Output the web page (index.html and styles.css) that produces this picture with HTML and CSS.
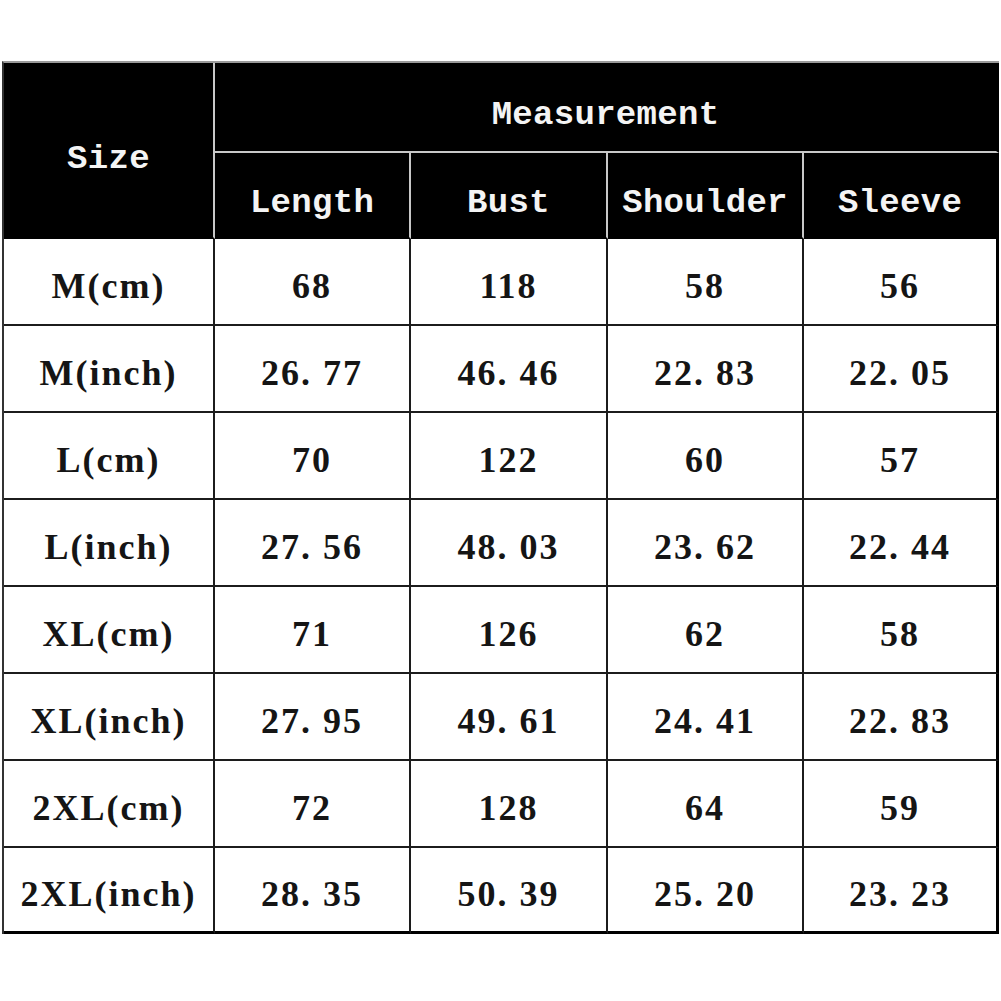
FILE: index.html
```html
<!DOCTYPE html>
<html>
<head>
<meta charset="utf-8">
<link rel="stylesheet" href="styles.css">
</head>
<body>
<div class="chart">
  <div class="cell head size">Size</div>
  <div class="cell head meas">Measurement</div>
  <div class="cell head sub">Length</div>
  <div class="cell head sub">Bust</div>
  <div class="cell head sub">Shoulder</div>
  <div class="cell head sub last">Sleeve</div>

  <div class="cell">M(cm)</div><div class="cell">68</div><div class="cell">118</div><div class="cell">58</div><div class="cell last">56</div>
  <div class="cell">M(inch)</div><div class="cell">26. 77</div><div class="cell">46. 46</div><div class="cell">22. 83</div><div class="cell last">22. 05</div>
  <div class="cell">L(cm)</div><div class="cell">70</div><div class="cell">122</div><div class="cell">60</div><div class="cell last">57</div>
  <div class="cell">L(inch)</div><div class="cell">27. 56</div><div class="cell">48. 03</div><div class="cell">23. 62</div><div class="cell last">22. 44</div>
  <div class="cell">XL(cm)</div><div class="cell">71</div><div class="cell">126</div><div class="cell">62</div><div class="cell last">58</div>
  <div class="cell">XL(inch)</div><div class="cell">27. 95</div><div class="cell">49. 61</div><div class="cell">24. 41</div><div class="cell last">22. 83</div>
  <div class="cell">2XL(cm)</div><div class="cell">72</div><div class="cell">128</div><div class="cell">64</div><div class="cell last">59</div>
  <div class="cell bottom">2XL(inch)</div><div class="cell bottom">28. 35</div><div class="cell bottom">50. 39</div><div class="cell bottom">25. 20</div><div class="cell bottom last">23. 23</div>
</div>
</body>
</html>
```

FILE: styles.css
```css
html, body {
  margin: 0;
  padding: 0;
  background: #ffffff;
}

body {
  padding: 61px 0 0 2px;
}

.chart {
  display: grid;
  width: 997px;
  box-sizing: border-box;
  grid-template-columns: 211px 196px 197px 196px 195px;
  grid-template-rows: 90px 86px repeat(7, 87px) 86px;
  border-left: 2px solid #333;
  border-top: 2px solid #9a9a9a;
}

.cell {
  box-sizing: border-box;
  display: flex;
  align-items: center;
  justify-content: center;
  padding-top: 8px;
  border-right: 2px solid #1c1c1c;
  border-bottom: 2px solid #1c1c1c;
  font-family: "Liberation Serif", "Times New Roman", serif;
  font-weight: bold;
  font-size: 36px;
  letter-spacing: 2px;
  color: #151515;
  white-space: nowrap;
}

.cell.last {
  border-right-width: 3px;
  border-right-color: #000;
}

.cell.bottom {
  border-bottom-width: 3px;
  border-bottom-color: #000;
}

.head {
  background: #000;
  color: #f4f4f4;
  font-family: "Liberation Mono", "Courier New", monospace;
  font-size: 34px;
  letter-spacing: 0.3px;
  border-right-color: #c8c8c8;
  border-bottom-color: #c8c8c8;
  padding-top: 16px;
}

.head.size {
  grid-row: 1 / span 2;
  border-bottom-color: #000;
  padding-top: 18px;
}

.head.meas {
  grid-column: 2 / span 4;
  border-right: 3px solid #000;
  padding-top: 16px;
}

.head.sub {
  border-bottom-color: #000;
}

.head.last {
  border-right-color: #000;
}
```
